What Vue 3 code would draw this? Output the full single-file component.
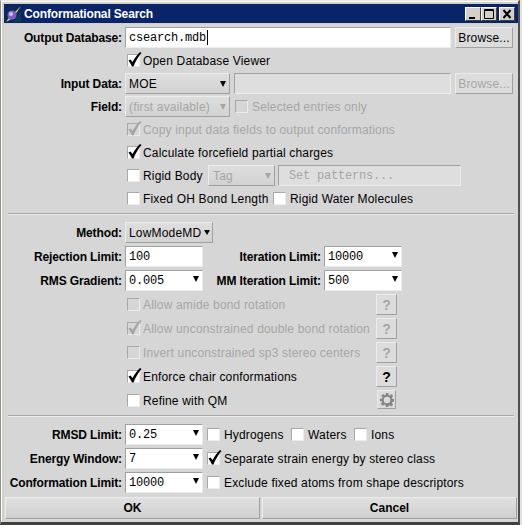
<script setup>
const sideRows = [
  { text: 'Allow amide bond rotation', off: true },
  { text: 'Allow unconstrained double bond rotation', off: true, checked: true },
  { text: 'Invert unconstrained sp3 stereo centers', off: true },
  { text: 'Enforce chair conformations', checked: true },
]
const tick = 'M1.5 8.5 L3.5 7.5 L5.5 10 C7.5 6 10 3 13 0 L14.5 1 C11 5 8.5 9.5 6.5 14.5 L5 14.5 C4 12.5 3 10.5 1.5 8.5z'
</script>

<template>
  <div class="window">
    <div class="titlebar">
      <svg class="app-icon" width="16" height="16" viewBox="0 0 16 16">
        <rect width="16" height="16" fill="#0f3a4c" />
        <path d="M0 0h16v4L8 16H0z" fill="#0b2a5c" />
        <path d="M16 0 L8 12 L1 16 L3 13z" fill="#e8cc50" />
        <circle cx="7" cy="9" r="4.5" fill="#7c5cc8" />
        <circle cx="6" cy="8" r="2" fill="#cbbcf2" />
      </svg>
      <span class="title">Conformational Search</span>
      <div class="win-buttons">
        <button class="win-btn">
          <svg width="14" height="12" viewBox="0 0 14 12"><path d="M3 9h6v2H3z" fill="#000" /></svg>
        </button>
        <button class="win-btn">
          <svg width="14" height="12" viewBox="0 0 14 12"><path d="M2.5 1.500h9v9h-9z M2.500 2.500h9" fill="none" stroke="#000" /></svg>
        </button>
        <button class="win-btn close">
          <svg width="14" height="12" viewBox="0 0 14 12"><path d="M3.500 2l7 8M10.500 2l-7 8" fill="none" stroke="#000" stroke-width="2" /></svg>
        </button>
      </div>
    </div>

    <div class="body">
      <section class="section first">
        <div class="row">
          <label class="label">Output Database:</label>
          <div class="field mono output">csearch.mdb<i class="caret"></i></div>
          <button class="btn browse">Browse...</button>
        </div>
        <div class="row indent">
          <span class="check"><svg class="tick" width="16" height="16" viewBox="0 0 16 16"><path :d="tick" /></svg></span>
          <span class="text">Open Database Viewer</span>
        </div>
        <div class="row">
          <label class="label">Input Data:</label>
          <div class="select w-input">MOE<i class="arrow"></i></div>
          <div class="field off-field input-path"></div>
          <button class="btn browse off">Browse...</button>
        </div>
        <div class="row">
          <label class="label">Field:</label>
          <div class="select w-input off">(first available)<i class="arrow"></i></div>
          <span class="check off selected-check"></span>
          <span class="text off">Selected entries only</span>
        </div>
        <div class="row indent">
          <span class="check off"><svg class="tick" width="16" height="16" viewBox="0 0 16 16"><path :d="tick" /></svg></span>
          <span class="text off">Copy input data fields to output conformations</span>
        </div>
        <div class="row indent">
          <span class="check"><svg class="tick" width="16" height="16" viewBox="0 0 16 16"><path :d="tick" /></svg></span>
          <span class="text">Calculate forcefield partial charges</span>
        </div>
        <div class="row indent">
          <span class="check"></span>
          <span class="text rigid-text">Rigid Body</span>
          <div class="select w-tag off">Tag<i class="arrow"></i></div>
          <div class="field off-field mono patterns">Set patterns...</div>
        </div>
        <div class="row indent">
          <span class="check"></span>
          <span class="text fixed-text">Fixed OH Bond Length</span>
          <span class="check"></span>
          <span class="text">Rigid Water Molecules</span>
        </div>
      </section>

      <hr class="sep" />

      <section class="section">
        <div class="row">
          <label class="label">Method:</label>
          <div class="select w-method">LowModeMD<i class="arrow"></i></div>
        </div>
        <div class="row">
          <label class="label">Rejection Limit:</label>
          <div class="field mono w-num">100</div>
          <label class="label second">Iteration Limit:</label>
          <div class="combo mono">10000<i class="arrow"></i></div>
        </div>
        <div class="row">
          <label class="label">RMS Gradient:</label>
          <div class="combo mono">0.005<i class="arrow"></i></div>
          <label class="label second">MM Iteration Limit:</label>
          <div class="combo mono">500<i class="arrow"></i></div>
        </div>
        <div v-for="r in sideRows" :key="r.text" class="row indent">
          <span class="check" :class="{ off: r.off }">
            <svg v-if="r.checked" class="tick" width="16" height="16" viewBox="0 0 16 16"><path :d="tick" /></svg>
          </span>
          <span class="text side-text" :class="{ off: r.off }">{{ r.text }}</span>
          <button class="btn help" :class="{ off: r.off }">?</button>
        </div>
        <div class="row indent">
          <span class="check"></span>
          <span class="text side-text">Refine with QM</span>
          <button class="btn gear">
            <svg width="14" height="14" viewBox="0 0 17 17">
              <path fill-rule="evenodd" fill="#858585" d="M7 0h3l.4 2.600 1.300.5 2.100-1.500 2.100 2.100-1.500 2.100.5 1.300 2.600.4v3l-2.600.4-.5 1.300 1.500 2.100-2.100 2.100-2.100-1.500-1.300.5L10 17H7l-.4-2.600-1.300-.5-2.100 1.500-2.100-2.100 1.500-2.100-.5-1.300L-.000 10V7l2.600-.4.500-1.300-1.500-2.100 2.100-2.100 2.100 1.500 1.300-.5zM8.500 4.500a4 4 0 1 0 0 8 4 4 0 0 0 0-8z" />
            </svg>
          </button>
        </div>
      </section>

      <hr class="sep" />

      <section class="section">
        <div class="row">
          <label class="label">RMSD Limit:</label>
          <div class="combo mono">0.25<i class="arrow"></i></div>
          <span class="check after-combo"></span>
          <span class="text hydrogens">Hydrogens</span>
          <span class="check"></span>
          <span class="text waters">Waters</span>
          <span class="check"></span>
          <span class="text">Ions</span>
        </div>
        <div class="row">
          <label class="label">Energy Window:</label>
          <div class="combo mono">7<i class="arrow"></i></div>
          <span class="check after-combo"><svg class="tick" width="16" height="16" viewBox="0 0 16 16"><path :d="tick" /></svg></span>
          <span class="text">Separate strain energy by stereo class</span>
        </div>
        <div class="row">
          <label class="label">Conformation Limit:</label>
          <div class="combo mono">10000<i class="arrow"></i></div>
          <span class="check after-combo"></span>
          <span class="text">Exclude fixed atoms from shape descriptors</span>
        </div>
      </section>

      <div class="actions">
        <button class="action">OK</button>
        <button class="action">Cancel</button>
      </div>
    </div>
  </div>
</template>

<style>
html, body { margin: 0; background: #e4e1da; overflow: hidden; }
</style>

<style scoped>
.window {
  box-sizing: border-box;
  width: 520px;
  height: 525px;
  padding: 3px 0 0 3px;
  background: #d4d0c8;
  border-style: solid;
  border-width: 1px 2px 3px 1px;
  border-color: #e8e6e0 #505050 #404040 #909090;
  box-shadow: inset 1px 1px 0 #fff;
  display: flex;
  flex-direction: column;
  font: 12px "Liberation Sans", Arial, sans-serif;
  letter-spacing: 0.17px;
  color: #000;
}
.titlebar {
  height: 19px;
  flex: none;
  background: #0a246a;
  display: flex;
  align-items: center;
  padding: 0 3px 0 1px;
  color: #fff;
}
.app-icon { margin-right: 3px; }
.title { font: bold 12px "Liberation Sans", Arial, sans-serif; letter-spacing: -0.15px; }
.win-buttons { margin-left: auto; display: flex; }
.win-btn {
  box-sizing: border-box;
  width: 16px;
  height: 14px;
  padding: 0;
  display: block;
  background: #d4d0c8;
  border: 1px solid;
  border-color: #fff #404040 #404040 #fff;
}
.win-btn svg { display: block; }
.win-btn.close { margin-left: 2px; }
.body {
  flex: 1;
  background: #d6d6d6;
  margin-top: 1px;
  padding: 3px 0 0;
  display: flex;
  flex-direction: column;
}
.section {
  display: flex;
  flex-direction: column;
  gap: 3px;
  padding: 0 4px;
}
.section.first { gap: 2px; }
.row {
  height: 21px;
  display: flex;
  align-items: center;
}
.row.indent { padding-left: 117px; }
.row.indent > .check:first-child { margin-right: 3px; }
.label {
  box-sizing: border-box;
  width: 114px;
  margin-right: 3px;
  flex: none;
  font-weight: bold;
  letter-spacing: -0.12px;
  white-space: nowrap;
  display: flex;
  justify-content: flex-end;
}
.label.second { width: 118px; }
.text { white-space: nowrap; flex: none; }
.off { color: #a6a6a6; }
.mono { font: 12px "Liberation Mono", monospace; letter-spacing: -0.2px; }
.field, .combo {
  box-sizing: border-box;
  height: 21px;
  background: #fff;
  border: 1px solid;
  border-color: #a0a0a0 #ececec #ececec #a0a0a0;
  padding: 0 3px;
  display: flex;
  align-items: center;
  position: relative;
  white-space: nowrap;
  flex: none;
}
.output { width: 326px; }
.caret { width: 1px; height: 15px; background: #000; margin-left: 1px; }
.off-field { background: #dedede; color: #a6a6a6; }
.input-path { width: 217px; margin-left: 4px; }
.patterns { width: 183px; margin-left: 3px; padding-left: 10px; }
.w-num { width: 78px; }
.combo { width: 78px; }
.combo .arrow { top: 5px; right: 3px; border-width: 6px 3.5px 0; }
.btn {
  box-sizing: border-box;
  font: inherit;
  letter-spacing: inherit;
  height: 21px;
  padding: 0;
  background: #dcdcdc;
  border: 1px solid;
  border-color: #ececec #a0a0a0 #a0a0a0 #ececec;
  color: #000;
}
.btn.off { color: #a6a6a6; }
.browse { width: 58px; margin-left: 4px; flex: none; }
.help { width: 21px; font: bold 14px "Liberation Sans", Arial, sans-serif; flex: none; }
.gear {
  width: 19px;
  height: 19px;
  margin-left: 1px;
  align-self: flex-start;
  display: flex;
  align-items: center;
  justify-content: center;
  flex: none;
}
.select {
  box-sizing: border-box;
  height: 21px;
  padding: 0 3px;
  background: linear-gradient(#dedede, #d2d2d2);
  border: 1px solid;
  border-color: #ececec #a0a0a0 #a0a0a0 #ececec;
  display: flex;
  align-items: center;
  position: relative;
  flex: none;
  white-space: nowrap;
}
.w-input { width: 105px; }
.w-tag { width: 67px; padding-left: 4px; }
.w-method { width: 88px; }
.arrow {
  position: absolute;
  right: 3px;
  top: 7px;
  border-style: solid;
  border-width: 6px 3.5px 0;
  border-color: #000 transparent transparent;
}
.w-method .arrow { right: 2px; border-width: 5px 3px 0; }
.select.off .arrow { border-top-color: #a6a6a6; }
.check {
  box-sizing: border-box;
  width: 13px;
  height: 13px;
  margin: 0 4px 0 2px;
  flex: none;
  background: #fff;
  border: 1px solid;
  border-color: #a8a8a8 #ececec #ececec #a8a8a8;
  position: relative;
}
.check.off { background: #d6d6d6; }
.tick {
  position: absolute;
  left: -1px;
  top: -3px;
}
.check.off .tick { fill: #a6a6a6; }
.selected-check { margin-left: 5px; }
.rigid-text { width: 65px; }
.fixed-text { width: 128px; }
.side-text { width: 233px; }
.after-combo { margin-left: 4px; }
.hydrogens { width: 65px; }
.waters { width: 44px; }
.sep {
  margin: 4px 4px 7px;
  height: 0;
  border: none;
  border-top: 1px solid #a8a8a8;
  border-bottom: 1px solid #ececec;
}
.actions {
  margin-top: auto;
  display: flex;
  gap: 2px;
  padding: 0 1px 3px;
}
.action {
  flex: 1;
  height: 22px;
  padding: 0;
  font: bold 12px "Liberation Sans", Arial, sans-serif;
  background: linear-gradient(#e0e0e0, #cfcfcf);
  border: 1px solid;
  border-color: #ececec #a0a0a0 #a0a0a0 #ececec;
  color: #000;
}
</style>
